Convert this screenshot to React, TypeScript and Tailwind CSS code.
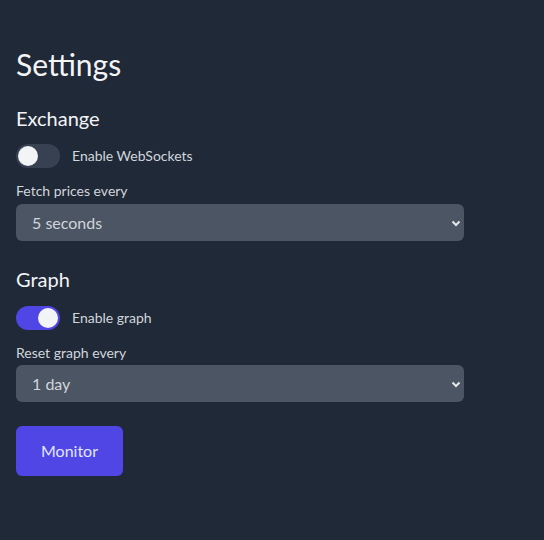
import { useState } from 'react';

const Toggle = ({ on, onChange, label }: { on: boolean; onChange: (v: boolean) => void; label: string }) => (
  <label className="flex items-center gap-3 cursor-pointer">
    <button
      type="button"
      onClick={() => onChange(!on)}
      className={`relative w-11 h-6 rounded-full transition-colors ${on ? 'bg-[#4f46e5]' : 'bg-[#374151]'}`}
    >
      <span
        className={`absolute top-0.5 h-5 w-5 rounded-full bg-[#f3f4f6] transition-all ${on ? 'left-[22px]' : 'left-0.5'}`}
      />
    </button>
    <span className="text-sm text-[#d1d5db]">{label}</span>
  </label>
);

const Select = ({ value, options, onChange }: { value: string; options: string[]; onChange: (v: string) => void }) => (
  <div className="relative w-[448px]">
    <select
      value={value}
      onChange={(e) => onChange(e.target.value)}
      className="appearance-none w-full h-[37px] rounded-md bg-[#4b5563] text-[#d1d5db] pl-4 pr-8 text-base outline-none"
    >
      {options.map((o) => (
        <option key={o}>{o}</option>
      ))}
    </select>
    {/* chevron */}
    <svg
      className="absolute right-0.5 top-1/2 -translate-y-1/2 pointer-events-none"
      width="12"
      height="12"
      viewBox="0 0 12 12"
      fill="none"
    >
      <path d="M2.5 4.5 6 8l3.5-3.5" stroke="#e5e7eb" strokeWidth="2" />
    </svg>
  </div>
);

export default function App() {
  const [ws, setWs] = useState(false);
  const [graph, setGraph] = useState(true);
  const [fetchEvery, setFetchEvery] = useState('5 seconds');
  const [resetEvery, setResetEvery] = useState('1 day');

  return (
    <div className="min-h-[540px] bg-[#1f2937] px-4 pt-[46px] font-['Lato',sans-serif]">
      <h1 className="text-[30px] leading-9 text-[#f3f4f6] mb-[22px]">Settings</h1>

      {/* Exchange */}
      <h2 className="text-xl text-[#f3f4f6] mb-3">Exchange</h2>
      <Toggle on={ws} onChange={setWs} label="Enable WebSockets" />
      <p className="text-sm text-[#d1d5db] mt-[13px] mb-[3px]">Fetch prices every</p>
      <Select value={fetchEvery} onChange={setFetchEvery} options={['1 second', '5 seconds', '10 seconds', '30 seconds']} />

      {/* Graph */}
      <h2 className="text-xl text-[#f3f4f6] mt-6 mb-[13px]">Graph</h2>
      <Toggle on={graph} onChange={setGraph} label="Enable graph" />
      <p className="text-sm text-[#d1d5db] mt-[13px] mb-[2px]">Reset graph every</p>
      <Select value={resetEvery} onChange={setResetEvery} options={['1 hour', '1 day', '1 week']} />

      <button className="mt-6 h-[50px] w-[107px] rounded-md bg-[#4f46e5] text-[#e0e7ff] text-base">Monitor</button>
    </div>
  );
}
